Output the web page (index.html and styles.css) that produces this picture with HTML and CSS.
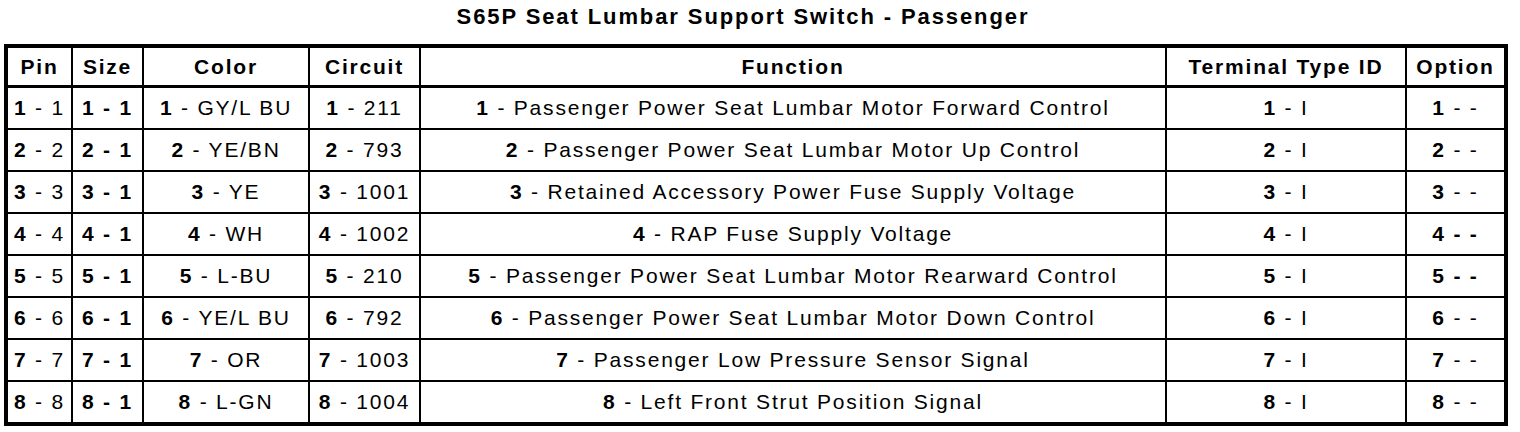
FILE: index.html
```html
<!DOCTYPE html>
<html>
<head>
<meta charset="utf-8">
<link rel="stylesheet" href="styles.css">
</head>
<body>
<h1 class="title">S65P Seat Lumbar Support Switch - Passenger</h1>
<div class="grid">
  <div class="cell head">Pin</div>
  <div class="cell head">Size</div>
  <div class="cell head">Color</div>
  <div class="cell head">Circuit</div>
  <div class="cell head">Function</div>
  <div class="cell head">Terminal Type ID</div>
  <div class="cell head">Option</div>

  <div class="cell"><b>1</b> - 1</div>
  <div class="cell bold">1 - 1</div>
  <div class="cell"><b>1</b> - GY/L BU</div>
  <div class="cell"><b>1</b> - 211</div>
  <div class="cell"><b>1</b> - Passenger Power Seat Lumbar Motor Forward Control</div>
  <div class="cell"><b>1</b> - I</div>
  <div class="cell"><b>1</b> - -</div>

  <div class="cell"><b>2</b> - 2</div>
  <div class="cell bold">2 - 1</div>
  <div class="cell"><b>2</b> - YE/BN</div>
  <div class="cell"><b>2</b> - 793</div>
  <div class="cell"><b>2</b> - Passenger Power Seat Lumbar Motor Up Control</div>
  <div class="cell"><b>2</b> - I</div>
  <div class="cell"><b>2</b> - -</div>

  <div class="cell"><b>3</b> - 3</div>
  <div class="cell bold">3 - 1</div>
  <div class="cell"><b>3</b> - YE</div>
  <div class="cell"><b>3</b> - 1001</div>
  <div class="cell"><b>3</b> - Retained Accessory Power Fuse Supply Voltage</div>
  <div class="cell"><b>3</b> - I</div>
  <div class="cell"><b>3</b> - -</div>

  <div class="cell"><b>4</b> - 4</div>
  <div class="cell bold">4 - 1</div>
  <div class="cell"><b>4</b> - WH</div>
  <div class="cell"><b>4</b> - 1002</div>
  <div class="cell"><b>4</b> - RAP Fuse Supply Voltage</div>
  <div class="cell"><b>4</b> - I</div>
  <div class="cell bold">4 - -</div>

  <div class="cell"><b>5</b> - 5</div>
  <div class="cell bold">5 - 1</div>
  <div class="cell"><b>5</b> - L-BU</div>
  <div class="cell"><b>5</b> - 210</div>
  <div class="cell"><b>5</b> - Passenger Power Seat Lumbar Motor Rearward Control</div>
  <div class="cell"><b>5</b> - I</div>
  <div class="cell bold">5 - -</div>

  <div class="cell"><b>6</b> - 6</div>
  <div class="cell bold">6 - 1</div>
  <div class="cell"><b>6</b> - YE/L BU</div>
  <div class="cell"><b>6</b> - 792</div>
  <div class="cell"><b>6</b> - Passenger Power Seat Lumbar Motor Down Control</div>
  <div class="cell"><b>6</b> - I</div>
  <div class="cell"><b>6</b> - -</div>

  <div class="cell"><b>7</b> - 7</div>
  <div class="cell bold">7 - 1</div>
  <div class="cell"><b>7</b> - OR</div>
  <div class="cell"><b>7</b> - 1003</div>
  <div class="cell"><b>7</b> - Passenger Low Pressure Sensor Signal</div>
  <div class="cell"><b>7</b> - I</div>
  <div class="cell"><b>7</b> - -</div>

  <div class="cell"><b>8</b> - 8</div>
  <div class="cell bold">8 - 1</div>
  <div class="cell"><b>8</b> - L-GN</div>
  <div class="cell"><b>8</b> - 1004</div>
  <div class="cell"><b>8</b> - Left Front Strut Position Signal</div>
  <div class="cell"><b>8</b> - I</div>
  <div class="cell"><b>8</b> - -</div>
</div>
</body>
</html>
```
FILE: styles.css
```css
* { box-sizing: border-box; }
html, body {
  margin: 0;
  padding: 0;
  background: #fff;
  color: #000;
  font-family: "Liberation Sans", Arial, Helvetica, sans-serif;
}
body {
  padding: 0 12px 0 4px;
}
.title {
  margin: 0;
  height: 44px;
  padding-top: 4px;
  padding-right: 26px;
  font-size: 22px;
  line-height: 26px;
  font-weight: bold;
  letter-spacing: 1.9px;
  text-align: center;
}
.grid {
  display: grid;
  grid-template-columns: 63px 69px 164px 109px 744px 238px 97px;
  grid-template-rows: 38px repeat(8, 40px);
  gap: 2px;
  width: 1504px;
  background: #000;
  border: 4px solid #000;
}
.cell {
  background: #fff;
  text-align: center;
  font-size: 21px;
  line-height: 40px;
  letter-spacing: 1.8px;
  white-space: nowrap;
}
.cell b, .bold {
  font-weight: bold;
}
.head {
  font-weight: bold;
  line-height: 38px;
  margin-bottom: 1px;
}
```
